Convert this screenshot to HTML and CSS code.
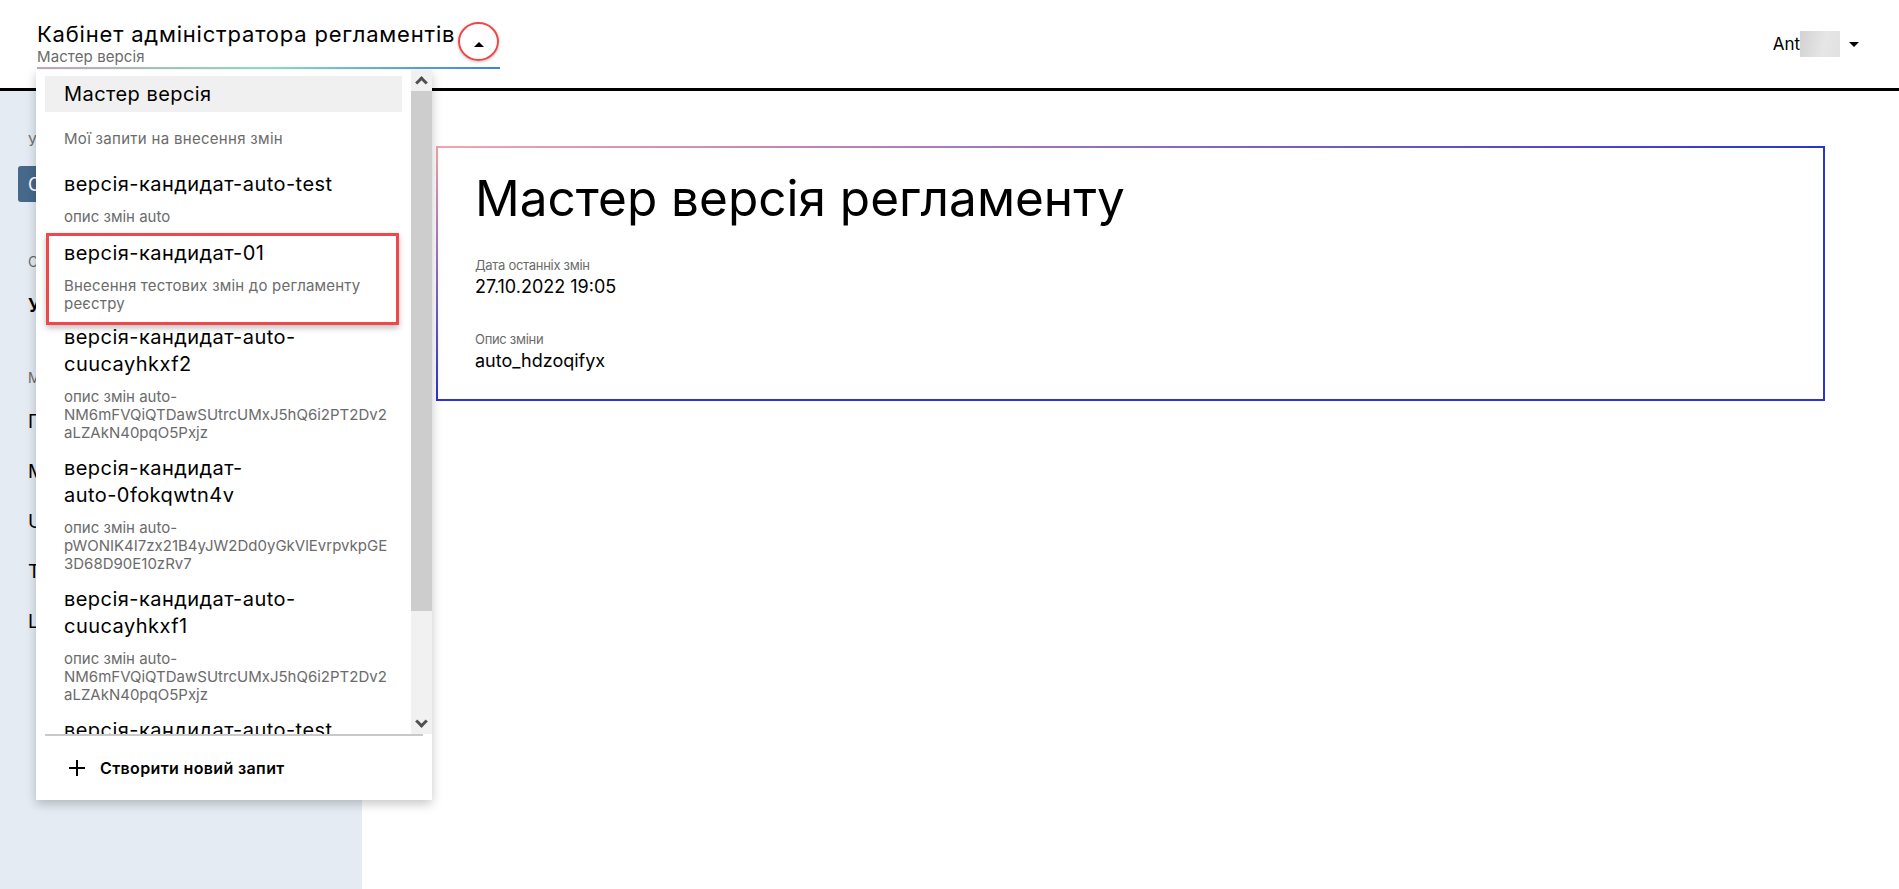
FILE: index.html
```html
<!DOCTYPE html>
<html lang="uk">
<head>
  <meta charset="UTF-8">
  <meta name="viewport" content="width=device-width, initial-scale=1.0">
  <title>Кабінет адміністратора регламентів</title>
  <link rel="stylesheet" href="styles.css">
</head>
<body>
<header class="topbar">
  <div class="portal">
    <div class="portal-head">
      <div class="portal-titles">
        <div class="portal-title">Кабінет адміністратора регламентів</div>
        <div class="portal-sub">Мастер версія</div>
      </div>
      <button class="portal-toggle">
        <span class="caret-up"></span>
        <span class="mark-circle"></span>
      </button>
    </div>

    <div class="version-menu">
      <div class="menu-body">
        <div class="menu-list">
          <div class="menu-master">Мастер версія</div>
          <div class="menu-label">Мої запити на внесення змін</div>

          <div class="menu-item">
            <div class="item-title">версія-кандидат-auto-test</div>
            <div class="item-desc">опис змін auto</div>
          </div>
          <div class="menu-item marked">
            <div class="item-title">версія-кандидат-01</div>
            <div class="item-desc">Внесення тестових змін до регламенту реєстру</div>
          </div>
          <div class="menu-item">
            <div class="item-title">версія-кандидат-auto-<br>cuucayhkxf2</div>
            <div class="item-desc">опис змін auto-<br>NM6mFVQiQTDawSUtrcUMxJ5hQ6i2PT2Dv2<br>aLZAkN40pqO5Pxjz</div>
          </div>
          <div class="menu-item">
            <div class="item-title">версія-кандидат-<br>auto-0fokqwtn4v</div>
            <div class="item-desc">опис змін auto-<br>pWONIK4I7zx21B4yJW2Dd0yGkVlEvrpvkpGE<br>3D68D90E10zRv7</div>
          </div>
          <div class="menu-item">
            <div class="item-title">версія-кандидат-auto-<br>cuucayhkxf1</div>
            <div class="item-desc">опис змін auto-<br>NM6mFVQiQTDawSUtrcUMxJ5hQ6i2PT2Dv2<br>aLZAkN40pqO5Pxjz</div>
          </div>
          <div class="menu-item">
            <div class="item-title">версія-кандидат-auto-test</div>
            <div class="item-desc">опис змін auto</div>
          </div>
        </div>
        <div class="scrollbar">
          <div class="scroll-btn"><span class="chev up"></span></div>
          <div class="scroll-thumb"></div>
          <div class="scroll-track"></div>
          <div class="scroll-btn"><span class="chev down"></span></div>
        </div>
      </div>
      <div class="menu-sep"></div>
      <div class="menu-footer">
        <span class="plus"></span>
        <span>Створити новий запит</span>
      </div>
    </div>
  </div>

  <div class="user">
    <span>Ant</span>
    <span class="user-blur"></span>
    <span class="caret-down"></span>
  </div>
</header>

<div class="layout">
  <aside class="sidebar">
    <div class="side-label">Управління версією</div>
    <button class="side-btn">Створити запит</button>
    <div class="side-label gap">Структура регламенту</div>
    <div class="side-link strong">Управління таблицями</div>
    <div class="side-label gap">Моделювання</div>
    <div class="side-link">Процеси</div>
    <div class="side-link">Моделі даних</div>
    <div class="side-link">UI-форми</div>
    <div class="side-link">Таблиці</div>
    <div class="side-link">Liquibase</div>
  </aside>

  <main class="content">
    <section class="card">
      <h1 class="card-title">Мастер версія регламенту</h1>
      <div class="field">
        <div class="field-label">Дата останніх змін</div>
        <div class="field-value">27.10.2022 19:05</div>
      </div>
      <div class="field">
        <div class="field-label">Опис зміни</div>
        <div class="field-value">auto_hdzoqifyx</div>
      </div>
    </section>
  </main>
</div>
</body>
</html>
```

FILE: styles.css
```css
body {
  margin: 0;
  background: #fff;
  color: #000;
  font-family: Inter, "Noto Sans", sans-serif;
  height: 889px;
  overflow: hidden;
}

/* header */
.topbar {
  display: flex;
  justify-content: space-between;
  height: 88px;
  padding: 0 40px 0 37px;
  border-bottom: 3px solid #000;
  position: relative;
  z-index: 5;
  background: #fff;
}

.portal {
  position: relative;
}

.portal-head {
  display: flex;
  align-items: flex-end;
  width: 463px;
  padding-top: 22px;
  border-bottom: 2px solid;
  border-image: linear-gradient(90deg, #c7a8ba, #8fe2c6 50%, #3e80e2) 1;
}

.portal-titles {
  flex: 1;
}

.portal-title {
  font-size: 22px;
  line-height: 25px;
  letter-spacing: 0.8px;
  white-space: nowrap;
}

.portal-sub {
  font-size: 15px;
  line-height: 20px;
  letter-spacing: 0.1px;
  color: #6b6b6b;
}

.portal-toggle {
  position: relative;
  width: 42px;
  height: 40px;
  margin-bottom: 5px;
  border: none;
  background: none;
  padding: 0;
}

.caret-up {
  position: absolute;
  left: 16px;
  top: 20px;
  border-left: 5px solid transparent;
  border-right: 5px solid transparent;
  border-bottom: 5px solid #000;
}

.mark-circle {
  position: absolute;
  left: 0;
  top: 0;
  width: 37px;
  height: 35px;
  border: 2.5px solid #f04848;
  border-radius: 50%;
  box-shadow: 0 1px 3px rgba(0,0,0,0.25);
}

.user {
  display: flex;
  align-items: center;
  height: 88px;
  font-size: 17px;
}

.user-blur {
  width: 40px;
  height: 26px;
  background: linear-gradient(100deg, #d2d2d2, #e6e6e6 60%, #e1e1e1);
}

.caret-down {
  margin-left: 9px;
  border-left: 5px solid transparent;
  border-right: 5px solid transparent;
  border-top: 5px solid #000;
}

/* version dropdown */
.version-menu {
  position: absolute;
  top: 70px;
  left: -1px;
  width: 396px;
  background: #fff;
  box-shadow: 0 4px 10px rgba(0,0,0,0.22);
  z-index: 10;
}

.menu-body {
  display: flex;
  height: 664px;
}

.menu-list {
  flex: 1;
  overflow: hidden;
}

.menu-master {
  margin: 6px 9px 0;
  height: 36px;
  line-height: 36px;
  padding-left: 19px;
  background: #f0f0f0;
  font-size: 20px;
  letter-spacing: 0.45px;
}

.menu-label {
  padding: 18px 19px 17px 28px;
  font-size: 15px;
  line-height: 18px;
  letter-spacing: 0.3px;
  color: #6b6b6b;
}

.menu-item {
  padding: 6px 10px 7px 28px;
}

.item-title {
  font-size: 20px;
  line-height: 27px;
  letter-spacing: 0.45px;
}

.item-desc {
  margin-top: 10px;
  font-size: 15px;
  line-height: 18px;
  color: #6b6b6b;
  white-space: nowrap;
}

.menu-item.marked {
  margin: 0 12px -7px 10px;
  padding: 4px 6px 9px 15px;
  border: 3px solid #f0484a;
  box-shadow: 0 3px 6px rgba(0,0,0,0.25);
}

.menu-item.marked .item-desc {
  white-space: normal;
  letter-spacing: 0.2px;
}

.scrollbar {
  width: 21px;
  display: flex;
  flex-direction: column;
  background: #f1f1f1;
}

.scroll-btn {
  height: 21px;
  display: flex;
  align-items: center;
  justify-content: center;
}

.scroll-thumb {
  height: 520px;
  background: #cdcdcd;
}

.scroll-track {
  flex: 1;
}

.chev {
  width: 6px;
  height: 6px;
  border-left: 3px solid #505050;
  border-top: 3px solid #505050;
}

.chev.up {
  transform: translateY(2px) rotate(45deg);
}

.chev.down {
  transform: translateY(-2px) rotate(225deg);
}

.menu-sep {
  height: 2px;
  margin: 0 9px;
  background: #c9c9c9;
}

.menu-footer {
  display: flex;
  align-items: center;
  height: 64px;
  padding-left: 33px;
  font-size: 16px;
  font-weight: 600;
  letter-spacing: 0.35px;
  gap: 15px;
}

.plus {
  position: relative;
  width: 16px;
  height: 16px;
}

.plus::before,
.plus::after {
  content: "";
  position: absolute;
  background: #000;
}

.plus::before {
  left: 7px;
  top: 0;
  width: 2px;
  height: 16px;
}

.plus::after {
  left: 0;
  top: 7px;
  width: 16px;
  height: 2px;
}

/* page */
.layout {
  display: flex;
  height: 798px;
}

.sidebar {
  width: 362px;
  box-sizing: border-box;
  padding: 40px 18px 0;
  background: #e4ebf2;
}

.side-label {
  padding-left: 10px;
  font-size: 14px;
  line-height: 20px;
  color: #6b6b6b;
}

.side-label.gap {
  margin-top: 50px;
}

.side-btn {
  display: block;
  margin-top: 15px;
  height: 36px;
  padding: 0 10px;
  border: none;
  border-radius: 3px;
  background: #46698a;
  color: #fff;
  font-family: inherit;
  font-size: 18px;
}

.side-link {
  padding-left: 10px;
  margin-top: 26px;
  font-size: 19px;
  line-height: 24px;
}

.side-link.strong {
  margin-top: 18px;
  font-weight: 600;
}

.side-label + .side-link {
  margin-top: 22px;
}

.content {
  flex: 1;
  padding: 55px 0 0 74px;
}

.card {
  width: 1389px;
  height: 255px;
  box-sizing: border-box;
  padding: 23px 37px;
  border: 2px solid;
  border-image: linear-gradient(to bottom right, #f2a6aa, #2b33d2 50%) 1;
}

.card-title {
  margin: 0;
  font-size: 49.5px;
  line-height: 54px;
  font-weight: normal;
}

.field {
  margin-top: 31px;
}

.field + .field {
  margin-top: 32px;
}

.field-label {
  font-size: 13px;
  line-height: 18px;
  letter-spacing: -0.3px;
  color: #6b6b6b;
}

.field-value {
  margin-top: 2px;
  font-size: 18px;
  line-height: 22px;
}
```
